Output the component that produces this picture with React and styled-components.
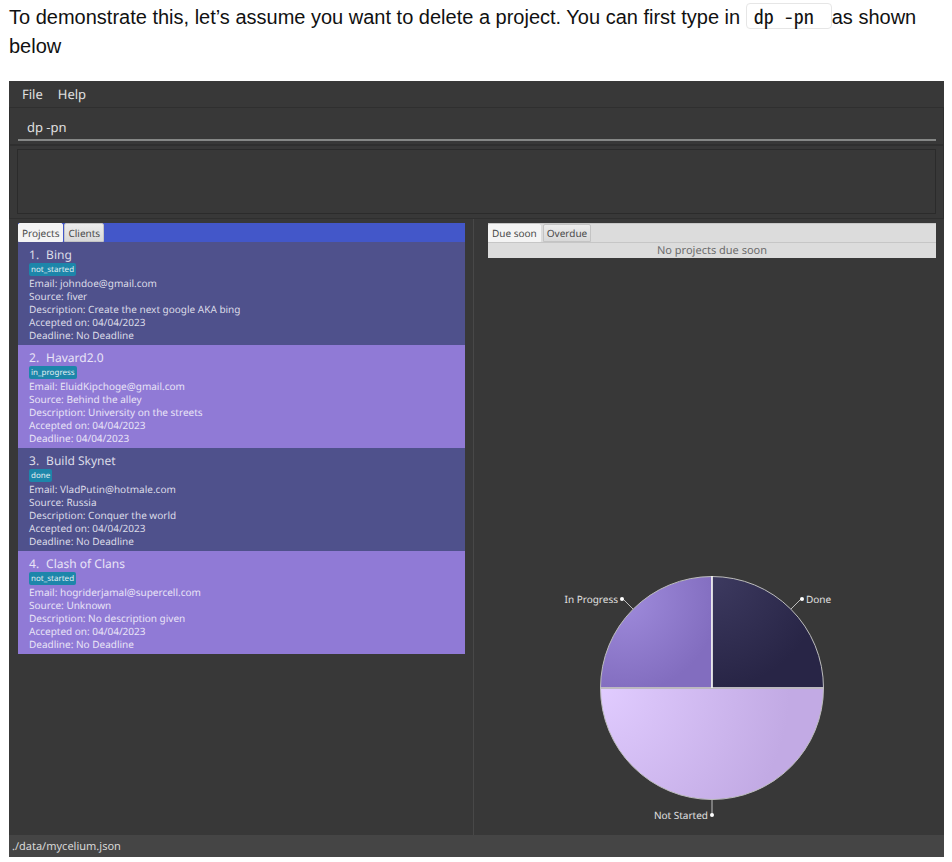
import React, { useState } from "react";
import styled, { createGlobalStyle } from "styled-components";

const GlobalStyle = createGlobalStyle`
  *, *::before, *::after { box-sizing: border-box; }
  body { margin: 0; background: #fff; }
  button, input { font: inherit; color: inherit; text-rendering: inherit; }
`;

const Page = styled.div`
  display: flex;
  flex-direction: column;
  min-height: 100vh;
  padding: 3px 8px 5px 9px;
  font-family: "Liberation Sans", Arial, sans-serif;
`;

const Intro = styled.p`
  margin: 0 0 20px;
  font-size: 20px;
  line-height: 29px;
  color: #111;
`;

const Code = styled.code`
  display: inline-block;
  height: 26px;
  padding: 0 7px;
  border: 1px solid #e6e6e6;
  border-radius: 4px;
  font-family: "Noto Sans Mono CJK SC", "Liberation Mono", monospace;
  font-size: 20px;
  line-height: 24px;
  vertical-align: top;
  white-space: pre;
`;

const Window = styled.main`
  flex: 1;
  display: flex;
  flex-direction: column;
  background: #383838;
  color: #e0e0e0;
  font-family: "Noto Sans", sans-serif;
  text-rendering: geometricPrecision;
`;

const MenuBar = styled.nav`
  display: flex;
  gap: 15px;
  height: 26px;
  padding: 0 13px;
`;

const MenuButton = styled.button`
  padding: 0;
  border: 0;
  background: none;
  font-size: 13px;
  line-height: 26px;
`;

const CommandArea = styled.form`
  display: flex;
  height: 39px;
  padding: 6px 7px 3px 8px;
  border: 1px solid #2f2f2f;
  border-bottom-width: 2px;
`;

const CommandInput = styled.input`
  flex: 1;
  min-width: 0;
  padding: 0 9px;
  border: 0;
  border-bottom: 2px solid #858786;
  outline: 0;
  background: transparent;
  font-size: 13px;
`;

const ResultArea = styled.section`
  display: flex;
  height: 73px;
  padding: 3px 7px 4px;
  border: 1px solid #2f2f2f;
  border-top: 0;
`;

const ResultBox = styled.output`
  flex: 1;
  border: 1px solid #2b2b2b;
`;

const Split = styled.div`
  flex: 1;
  display: grid;
  grid-template-columns: minmax(0, 465fr) minmax(0, 470fr);
`;

const ProjectPane = styled.section`
  padding: 4px 8px 0 9px;
  border-right: 1px solid #484848;
`;

const SummaryPane = styled.section`
  display: flex;
  flex-direction: column;
  justify-content: space-between;
  padding: 4px 8px 7px 14px;
`;

const TabBar = styled.div`
  display: flex;
  gap: ${(p) => (p.$accent ? 1 : 2)}px;
  height: ${(p) => (p.$accent ? 19 : 20)}px;
  border: solid ${(p) => (p.$accent ? "#4357c9" : "#c6c6c6")};
  border-width: ${(p) => (p.$accent ? "0" : "1px 0")};
  background: ${(p) => (p.$accent ? "#4357c9" : "#dcdcdc")};
`;

const Tab = styled.button`
  padding: 0 3px;
  border: 1px solid ${(p) => (p.$active ? "#f4f4f4" : "#c4c4c4")};
  border-radius: 2px 2px 0 0;
  background: ${(p) =>
    p.$active ? "#f4f4f4" : "linear-gradient(#ececec, #d9d9d9)"};
  color: #4a4a4a;
  font-size: 10px;
  line-height: 16px;
`;

const ProjectList = styled.ul`
  margin: 0;
  padding: 0;
  list-style: none;
`;

const ProjectCard = styled.li`
  min-height: 103px;
  padding: 5px 11px 3px;
  background: #4f518c;
  color: #dcdce8;
  font-size: 10px;
  line-height: 13px;

  &:nth-child(even) {
    background: #907ad6;
    color: #e9e4f7;
  }
`;

const ProjectTitle = styled.h2`
  display: flex;
  gap: 7px;
  margin: 0;
  font-size: 12px;
  font-weight: 400;
  line-height: 16px;
`;

const Status = styled.span`
  display: block;
  width: fit-content;
  margin-bottom: 1px;
  padding: 0 2px;
  border-radius: 2px;
  background: #1d86aa;
  color: #e0eef2;
  font-size: 8px;
  line-height: 13px;
`;

const Detail = styled.p`
  margin: 0;
`;

const EmptyMessage = styled.p`
  margin: 0;
  background: #dcdcdc;
  color: #6c6c6c;
  font-size: 11px;
  line-height: 15px;
  text-align: center;
`;

const Chart = styled.svg`
  display: block;
  align-self: center;
  width: 300px;
  height: 260px;
  font-size: 10px;
`;

const StatusBar = styled.footer`
  height: 22px;
  padding: 0 3px;
  background: #454545;
  color: #d8d8d8;
  font-size: 11px;
  line-height: 24px;
`;

const projects = [
  {
    name: "Bing",
    status: "not_started",
    email: "johndoe@gmail.com",
    source: "fiver",
    description: "Create the next google AKA bing",
    accepted: "04/04/2023",
    deadline: "No Deadline",
  },
  {
    name: "Havard2.0",
    status: "in_progress",
    email: "EluidKipchoge@gmail.com",
    source: "Behind the alley",
    description: "University on the streets",
    accepted: "04/04/2023",
    deadline: "04/04/2023",
  },
  {
    name: "Build Skynet",
    status: "done",
    email: "VladPutin@hotmale.com",
    source: "Russia",
    description: "Conquer the world",
    accepted: "04/04/2023",
    deadline: "No Deadline",
  },
  {
    name: "Clash of Clans",
    status: "not_started",
    email: "hogriderjamal@supercell.com",
    source: "Unknown",
    description: "No description given",
    accepted: "04/04/2023",
    deadline: "No Deadline",
  },
];

function Tabs({ labels, accent, name }) {
  const [active, setActive] = useState(labels[0]);
  return (
    <TabBar role="tablist" aria-label={name} $accent={accent}>
      {labels.map((label) => (
        <Tab
          key={label}
          type="button"
          role="tab"
          aria-selected={label === active}
          $active={label === active}
          onClick={() => setActive(label)}
        >
          {label}
        </Tab>
      ))}
    </TabBar>
  );
}

function Project({ index, project }) {
  return (
    <ProjectCard>
      <ProjectTitle>
        <span>{index}.</span>
        <span>{project.name}</span>
      </ProjectTitle>
      <Status>{project.status}</Status>
      <Detail>Email: {project.email}</Detail>
      <Detail>Source: {project.source}</Detail>
      <Detail>Description: {project.description}</Detail>
      <Detail>Accepted on: {project.accepted}</Detail>
      <Detail>Deadline: {project.deadline}</Detail>
    </ProjectCard>
  );
}

function StatusPie() {
  return (
    <Chart viewBox="0 0 300 260" role="img" aria-label="Projects by status">
      <defs>
        <radialGradient id="progress" gradientUnits="userSpaceOnUse" cx="62" cy="30" r="95">
          <stop offset="0" stopColor="#9f8bdc" />
          <stop offset="1" stopColor="#826dbf" />
        </radialGradient>
        <radialGradient id="done" gradientUnits="userSpaceOnUse" cx="150" cy="8" r="112">
          <stop offset="0" stopColor="#3d3a60" />
          <stop offset="1" stopColor="#282546" />
        </radialGradient>
        <radialGradient id="waiting" gradientUnits="userSpaceOnUse" cx="38" cy="120" r="190">
          <stop offset="0" stopColor="#e1ccff" />
          <stop offset="1" stopColor="#c2aae4" />
        </radialGradient>
      </defs>
      <g stroke="#bdbdbd" strokeWidth="1">
        <path d="M150 120H38.5A111.5 111.5 0 0 1 150 8.500Z" fill="url(#progress)" />
        <path d="M150 120V8.500A111.5 111.5 0 0 1 261.5 120Z" fill="url(#done)" />
        <path d="M38.5 120H261.5A111.5 111.5 0 0 1 38.5 120Z" fill="url(#waiting)" />
        <path d="M71 41L61 31M229 41L239 31M150 232V247" fill="none" />
      </g>
      <path d="M38 120H262" stroke="#bdb9c1" strokeWidth="2" />
      <path d="M150 8V120" stroke="#fff" strokeWidth="1.4" />
      <g fill="#fff">
        <circle cx="60" cy="31" r="2" />
        <circle cx="240" cy="31" r="2" />
        <circle cx="150" cy="247" r="2" />
      </g>
      <g fill="#e0e0e0">
        <text x="56" y="35" textAnchor="end">In Progress</text>
        <text x="244" y="35">Done</text>
        <text x="146" y="251" textAnchor="end">Not Started</text>
      </g>
    </Chart>
  );
}

export default function App() {
  const [command, setCommand] = useState("dp -pn");
  return (
    <Page>
      <GlobalStyle />
      <Intro>
        To demonstrate this, let’s assume you want to delete a project. You can
        first type in <Code>{"dp -pn "}</Code>as shown below
      </Intro>
      <Window>
        <MenuBar aria-label="Application menu">
          <MenuButton type="button">File</MenuButton>
          <MenuButton type="button">Help</MenuButton>
        </MenuBar>
        <CommandArea onSubmit={(e) => e.preventDefault()}>
          <CommandInput
            aria-label="Command"
            value={command}
            onChange={(e) => setCommand(e.target.value)}
          />
        </CommandArea>
        <ResultArea>
          <ResultBox aria-label="Command result" />
        </ResultArea>
        <Split>
          <ProjectPane>
            <Tabs name="Lists" labels={["Projects", "Clients"]} accent />
            <ProjectList>
              {projects.map((project, i) => (
                <Project key={project.name} index={i + 1} project={project} />
              ))}
            </ProjectList>
          </ProjectPane>
          <SummaryPane>
            <div>
              <Tabs name="Deadlines" labels={["Due soon", "Overdue"]} />
              <EmptyMessage>No projects due soon</EmptyMessage>
            </div>
            <StatusPie />
          </SummaryPane>
        </Split>
        <StatusBar>./data/mycelium.json</StatusBar>
      </Window>
    </Page>
  );
}
